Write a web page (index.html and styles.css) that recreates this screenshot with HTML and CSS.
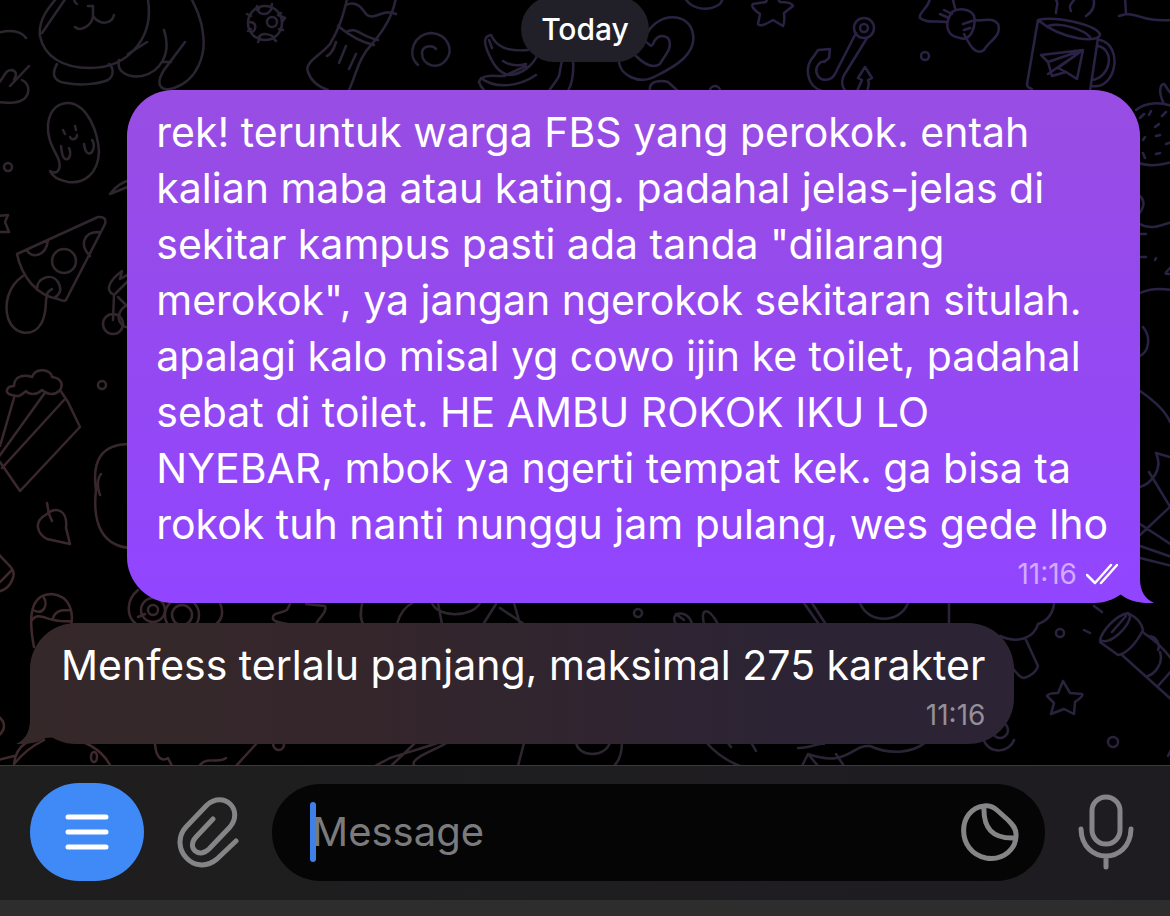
FILE: index.html
```html
<!DOCTYPE html>
<html lang="id">
  <head>
    <meta charset="utf-8" />
    <meta name="viewport" content="width=device-width, initial-scale=1" />
    <title>Chat</title>
    <link rel="stylesheet" href="styles.css">
  </head>
  <body>
    <main class="chat">
      <svg class="wallpaper" width="1170" height="770" viewBox="0 0 1170 770" aria-hidden="true">
        <defs>
          <linearGradient id="ink" gradientUnits="userSpaceOnUse" x1="100" y1="760" x2="900" y2="100">
            <stop offset="0" stop-color="#40292c" />
            <stop offset="0.4" stop-color="#2b252f" />
            <stop offset="1" stop-color="#2a2145" />
          </linearGradient>
        </defs>
        <g class="doodles">
          <!-- cat -->
          <path d="M60 -6C48 8 38 20 40 36C44 56 62 68 90 68C128 68 154 38 148 0M42 33L66 -2M74 -2C74 0 75 3 77 4M88 6L93 6L93 16C92 26 80 32 75 27M93 16C100 26 112 24 114 15" />
          <path d="M57 64C50 76 56 82 66 83C80 86 98 84 108 80C114 76 114 68 109 64M119 60C116 72 128 78 142 76C160 72 172 54 164 30M128 54L147 42M163 62H171M185 42L164 70C154 86 162 92 174 88C198 80 206 54 203 34C202 20 196 8 191 -2" />
          <path d="M-3 33C8 30 20 29 26 38M-4 86C6 76 4 70 12 70C18 72 16 76 14 80M10 86L29 66M22 80C30 84 30 94 24 99C16 105 6 102 -4 102" />
          <!-- ghost -->
          <path d="M50 171C58 176 62 168 58 158C52 146 47 138 48 124C50 108 60 102 70 103C88 106 98 132 99 152C98 174 84 184 68 182C58 180 52 176 50 171ZM63 130L65 134M75 126L76 130M70 137C72 141 77 139 77 135M61 146C62 156 64 162 69 158C71 154 70 150 69 148M84 144C85 152 88 156 92 152C95 148 94 142 92 140" />
          <circle cx="8" cy="167" r="4" />
          <path d="M110 194C116 186 122 182 130 180M110 194L130 186M-2 216L8 215L5 222L9 232L-2 232" />
          <!-- virus -->
          <circle cx="265" cy="23" r="17" />
          <circle cx="272" cy="22" r="5" />
          <path d="M256 8C260 16 268 16 272 8M249 22C258 22 256 32 251 32M258 38C262 32 270 34 274 37M257 6L259 9M272 4L271 8M281 13L278 15L285 18L282 22M283 30L279 29M276 41L273 38M258 42L260 38M248 31L251 29M247 14L251 16" />
          <!-- sock -->
          <path d="M348 -4C344 10 342 24 330 44C320 56 304 62 308 72C312 84 322 88 328 90M396 -4C394 14 384 30 372 44C358 58 356 76 348 92M346 5C356 0 362 8 366 14C374 22 382 8 396 14M338 26C350 36 360 42 374 45M346 32C356 26 360 36 378 40M336 42C334 48 332 54 327 56M346 46L339 63M356 54L349 69" />
          <!-- swirl and bananas -->
          <path d="M418 65C406 54 414 34 431 33C448 34 454 50 446 60C438 70 422 66 422 53C422 46 432 44 436 49" />
          <path d="M491 35C484 36 484 42 487 50C492 62 498 74 510 75C522 74 532 66 537 56M491 35C496 46 506 52 528 50M489 40L492 48M503 61C510 66 518 66 526 64M479 82C482 74 492 76 504 76L526 66M479 82C480 86 482 88 484 90M481 78C496 90 520 86 536 75M562 60L559 76C556 82 552 86 549 91M573 60C574 74 572 84 568 91" />
          <path d="M645 38C654 14 684 10 692 30C700 54 672 68 656 76C638 86 620 74 619 62M646 42C650 44 650 48 653 44C656 36 662 34 668 38C674 48 664 56 660 64C654 68 646 66 636 56M650 91C648 80 662 80 668 82L678 91M684 -3C692 10 708 12 720 4L724 -3M710 91A5 5 0 0 1 720 91" />
          <path d="M768 -4L766 2L753 4Q750 7 760 14L758 24Q760 28 773 20L783 26Q785 22 784 13L793 6Q792 2 780 2L776 -4" />
          <!-- anchor -->
          <circle cx="864" cy="28" r="10" />
          <circle cx="864" cy="28" r="4" />
          <path d="M856 33L836 72C832 82 820 82 817 74C814 66 822 60 824 62L829 58L830 49L818 50L814 56C804 66 806 86 822 91M867 38L846 72C840 80 842 88 846 91M857 91L862 80L858 78L865 67L872 78L868 80C870 84 868 88 867 91" />
          <!-- candy -->
          <path d="M930 -3C930 8 918 12 920 18C928 24 936 20 946 22M952 -4L955 8M940 14L949 18M944 10L952 14M952 12C944 24 946 36 960 38C972 42 976 24 974 16C970 8 958 8 952 12ZM974 20C984 22 992 16 998 24C1002 36 990 40 984 50C976 56 970 46 964 34M963 24L972 21M964 30L970 28" />
          <circle cx="925" cy="56" r="4" />
          <!-- mug -->
          <path d="M1038 20C1056 16 1094 24 1100 34C1100 44 1062 40 1038 20ZM1048 26C1062 22 1084 30 1090 37M1038 20L1027 84C1027 88 1030 88 1032 89M1098 38L1090 91M1100 40C1124 46 1116 90 1092 86M1098 46C1116 50 1110 78 1092 80M1054 -3C1060 4 1056 6 1056 13M1076 -3C1072 4 1068 4 1071 11M1093 -3C1096 6 1092 12 1086 16M1125 -4L1126 14L1119 16M1126 14C1140 14 1144 22 1172 20" />
          <path d="M1041 55L1083 50L1077 79L1066 72L1052 76L1048 62ZM1083 50L1048 74M1083 50L1058 68L1066 72M1048 62L1083 50" />
          <!-- strawberry -->
          <path d="M1136 110C1146 102 1160 102 1172 106M1164 104C1158 92 1160 84 1164 84C1168 88 1168 92 1172 94M1136 162C1150 168 1164 164 1172 162M1140 118L1144 114M1149 115L1151 111M1162 116L1166 112M1155 127L1159 124M1143 140L1145 137M1156 136L1160 135M1143 153L1145 158M1156 154L1160 153M1166 144L1172 142M1140 196C1148 204 1140 212 1138 216M1140 224C1150 230 1160 226 1172 222M1140 234H1146M1141 257H1146M1155 260L1156 258M1140 293C1150 288 1160 288 1172 290M1172 266C1164 274 1164 274 1170 274M1143 327C1152 338 1148 352 1140 356M1140 391C1156 402 1166 412 1170 422M1170 457L1156 453C1164 470 1150 484 1140 487M1149 472L1172 510M1140 535L1172 505M1140 524L1172 545M1140 546L1172 557M1140 558L1172 566" />
          <!-- pizza and cherries -->
          <path d="M17 254L98 217Q107 216 105 224L66 300Q64 302 58 299C38 296 22 278 17 254ZM27 250C30 258 46 258 48 240M99 232C82 232 80 246 90 256M37 290C36 278 52 272 58 282Q64 292 54 298M23 276C8 286 4 304 8 318C14 336 34 338 42 322C48 310 44 300 48 292L52 289" />
          <circle cx="64" cy="261" r="12" />
          <circle cx="113" cy="324" r="10" />
          <path d="M113 320L114 295C104 290 110 280 122 271L120 279L129 274M114 295L129 280M118 297L127 306M130 304C116 308 114 326 130 328" />
          <circle cx="102" cy="385" r="4" />
          <!-- popcorn -->
          <path d="M12 395C4 394 6 386 14 386C14 376 24 374 32 377C36 366 52 370 52 377C62 378 64 386 59 391C54 396 46 394 42 390C36 396 28 394 26 391C22 394 20 398 12 395ZM14 398L0 446M44 394L-2 458M64 400L2 468M60 390L68 402L80 427L20 491L0 462" />
          <path d="M47 503L49 514L52 521M47 514C32 522 38 534 47 539L70 544L66 528C68 510 56 506 47 514Z" />
          <path d="M130 444C100 444 92 462 96 490C92 526 104 546 130 548M101 474C96 480 98 490 100 495M-3 552C8 566 16 568 13 578C10 586 6 590 -3 592M-2 584L12 570" />
          <!-- egg, owl -->
          <path d="M34 647C26 606 36 594 52 594C70 596 74 612 71 626M32 620C40 610 48 624 71 621M33 610C44 616 48 604 44 598M53 618C56 610 62 610 70 610M138 590C126 600 126 616 136 624M138 617L145 614M220 603C224 612 222 620 216 624M290 604L287 610C280 614 272 612 273 619C276 624 284 622 290 625M306 604L325 606C328 612 318 618 315 626M362 604C360 614 360 620 364 625" />
          <circle cx="153" cy="610" r="12" />
          <circle cx="153" cy="610" r="5" />
          <circle cx="182" cy="615" r="17" />
          <circle cx="182" cy="615" r="10" />
          <!-- strip between the bubbles -->
          <path d="M397 624C400 612 406 606 414 602M432 603C438 618 472 618 480 603M438 603L442 624M484 623L496 604M500 608L524 624M514 603L520 624M676 624C668 612 688 608 692 624M676 614L684 620M704 624C700 608 708 606 718 624M804 603L818 623M812 603L825 623M860 603C868 624 900 624 908 603M949 603V623M1054 604C1052 618 1044 622 1038 624C1034 638 1018 644 1000 636M1026 640L1038 666Q1036 674 1024 678Q1018 678 1008 660" />
          <circle cx="638" cy="613" r="4" />
          <circle cx="1060" cy="633" r="4" />
          <!-- telescope -->
          <path d="M1094 606L1102 612M1084 630L1090 633M1128 613C1114 616 1102 632 1100 640C1110 646 1130 626 1130 616ZM1128 613C1138 618 1142 624 1143 630C1136 644 1126 654 1118 655L1100 642M1122 655L1172 700M1143 632C1146 636 1158 640 1172 660M1148 636C1158 636 1160 646 1158 650M1160 652C1164 664 1154 674 1148 676M1172 670L1158 686M1112 632L1126 616" />
          <path d="M1063 681L1070 693L1082 694Q1084 696 1075 702L1074 714L1064 709L1051 714L1054 703L1047 696Q1048 693 1058 693Z" />
          <circle cx="1113" cy="742" r="5" />
          <circle cx="1000" cy="730" r="8" />
          <path d="M983 739C990 756 1010 752 1014 740" />
          <!-- strip above the composer -->
          <path d="M-2 716C6 722 6 730 -2 736M14 764C16 742 34 736 56 736C84 738 102 750 110 765M14 764C22 754 32 746 44 740M-2 760L14 756M155 744C156 758 162 762 168 758L172 766M256 744L236 766M200 765C208 756 218 764 226 758M273 744C274 752 284 752 284 744M375 766L390 758C408 752 424 748 440 742M392 765L414 744M414 765C410 758 436 750 448 742M524 743L518 766M576 742C578 758 606 758 610 742M622 742C622 754 618 762 614 766M706 742C716 754 730 762 740 766M728 743L731 747M752 744L756 751M798 748C812 748 820 742 824 744M802 766L808 754L818 766M808 754C848 768 852 744 870 746C892 756 914 752 926 742M836 754L844 766M1172 748L1168 756" />
          <ellipse cx="94" cy="757" rx="3" ry="5" />
        </g>
      </svg>

      <div class="date">Today</div>

      <article class="bubble bubble-out">
        <p class="text">rek! teruntuk warga FBS yang perokok. entah<br />
          kalian maba atau kating. padahal jelas-jelas di<br />
          sekitar kampus pasti ada tanda "dilarang<br />
          merokok", ya jangan ngerokok sekitaran situlah.<br />
          apalagi kalo misal yg cowo ijin ke toilet, padahal<br />
          sebat di toilet. HE AMBU ROKOK IKU LO<br />
          NYEBAR, mbok ya ngerti tempat kek. ga bisa ta<br />
          rokok tuh nanti nunggu jam pulang, wes gede lho</p>
        <div class="meta">
          <time>11:16</time>
          <svg class="ticks" width="32" height="22" viewBox="0 0 32 22" aria-hidden="true">
            <path d="M1 12L9 20L25 2M15 20L31 2" />
          </svg>
        </div>
        <svg class="tail" width="60" height="46" viewBox="0 0 60 46" aria-hidden="true">
          <path d="M46 0V22C46 34 51 42 60 46C48 47 34 44 26 37Z" />
        </svg>
      </article>

      <article class="bubble bubble-in">
        <p class="text">Menfess terlalu panjang, maksimal 275 karakter</p>
        <div class="meta">
          <time>11:16</time>
        </div>
        <svg class="tail" width="60" height="46" viewBox="0 0 60 46" aria-hidden="true">
          <path d="M14 0V22C14 34 9 42 0 46C12 47 26 44 34 37Z" />
        </svg>
      </article>
    </main>

    <form class="composer">
      <button class="menu" type="button" aria-label="Menu">
        <svg width="44" height="36" viewBox="0 0 44 36">
          <path d="M3 3H41M3 18H41M3 33H41" />
        </svg>
      </button>
      <button class="icon" type="button" aria-label="Attach">
        <svg width="62" height="72" viewBox="0 0 62 72">
          <path d="M36 23L19 41C9 52 22 63 32 53L53 31C67 14 47 -6 30 9L9 31C-9 51 17 82 40 63L59 45" />
        </svg>
      </button>
      <div class="field">
        <span class="caret"></span>
        <input class="input" type="text" placeholder="Message" aria-label="Message" />
        <button class="icon" type="button" aria-label="Stickers">
          <svg width="58" height="58" viewBox="0 0 58 58">
            <path d="M23 3C-4 6 -5 49 25 55C43 58 56 45 55 31C55 25 51 21 47 17L37 8C32 3 28 2 23 3ZM23 3C22 25 31 36 54 35" />
          </svg>
        </button>
      </div>
      <button class="icon" type="button" aria-label="Voice message">
        <svg width="56" height="76" viewBox="0 0 56 76">
          <rect x="14" y="3" width="28" height="47" rx="14" />
          <path d="M3 35C4 71 52 71 53 35M28 62V73" />
        </svg>
      </button>
    </form>
    <div class="keyboard-edge"></div>
  </body>
</html>
```
FILE: styles.css
```css
* {
  box-sizing: border-box;
}

body {
  margin: 0;
  min-height: 100vh;
  display: flex;
  flex-direction: column;
  background-color: #000;
  color: #fff;
  font-family: Inter, "Liberation Sans", sans-serif;
}

button {
  border: 0;
  padding: 0;
  background: none;
}

svg {
  display: block;
  fill: none;
  stroke-linecap: round;
  stroke-linejoin: round;
}

.chat {
  position: relative;
  flex: 1;
  display: flex;
  flex-direction: column;
  padding: 0 30px 20px;
  overflow: hidden;
}

.wallpaper {
  position: absolute;
  top: 0;
  left: 0;
}

.doodles {
  stroke: url(#ink);
  stroke-width: 2.5;
}

.date {
  position: relative;
  align-self: center;
  margin: -4px 0 28px;
  padding: 0 20px;
  border-radius: 33px;
  background-color: #211f28;
  font-size: 30px;
  font-weight: 500;
  line-height: 66px;
}

.bubble {
  position: relative;
  padding: 14px 31px 13px;
  border-radius: 46px;
}

.bubble-out {
  align-self: flex-end;
  padding-right: 22px;
  padding-left: 29px;
  background: linear-gradient(#984de3, #9145ff);
}

.bubble-in {
  align-self: flex-start;
  margin-top: 20px;
  padding-right: 29px;
  background: linear-gradient(90deg, #352829, #34262b 35%, #2c2334 75%);
}

.text {
  margin: 0;
  font-size: 41px;
  line-height: 56px;
  white-space: nowrap;
}

.bubble-out .text {
  padding-right: 10px;
}

.meta {
  display: flex;
  justify-content: flex-end;
  align-items: center;
  gap: 9px;
  margin-top: 6px;
  font-size: 28px;
  line-height: 32px;
  color: #958f99;
}

.bubble-out .meta {
  color: #d2aaff;
}

.ticks {
  stroke: #fff;
  stroke-width: 2.5;
}

.tail {
  position: absolute;
  bottom: 0;
}

.bubble-out .tail {
  right: -14px;
  fill: #9145ff;
}

.bubble-in .tail {
  left: -14px;
  fill: #352829;
}

.composer {
  position: relative;
  display: flex;
  align-items: center;
  gap: 33px;
  padding: 17px 36px 19px 30px;
  border-top: 1px solid #3a393c;
  background: linear-gradient(90deg, #1f1e1e, #1e1c21);
}

.menu {
  display: flex;
  align-items: center;
  justify-content: center;
  width: 114px;
  height: 98px;
  border-radius: 49px;
  background-color: #3f8af7;
}

.menu svg {
  stroke: #fff;
  stroke-width: 5;
}

.icon svg {
  stroke: #858487;
  stroke-width: 5;
}

.field {
  position: relative;
  flex: 1;
  display: flex;
  align-items: center;
  height: 97px;
  padding: 0 26px 0 40px;
  border-radius: 49px;
  background-color: #050505;
}

.input {
  flex: 1;
  min-width: 0;
  padding: 0 0 2px;
  border: 0;
  outline: 0;
  background: none;
  color: #fff;
  font: inherit;
  font-size: 40px;
}

.input::placeholder {
  color: #7b7b7d;
  opacity: 1;
}

/* sits over the first letter of the placeholder */
.caret {
  position: absolute;
  left: 38px;
  width: 6px;
  height: 60px;
  border-radius: 3px;
  background-color: #3f7fe8;
}

.keyboard-edge {
  height: 16px;
  background-color: #2d2d2e;
}
```
